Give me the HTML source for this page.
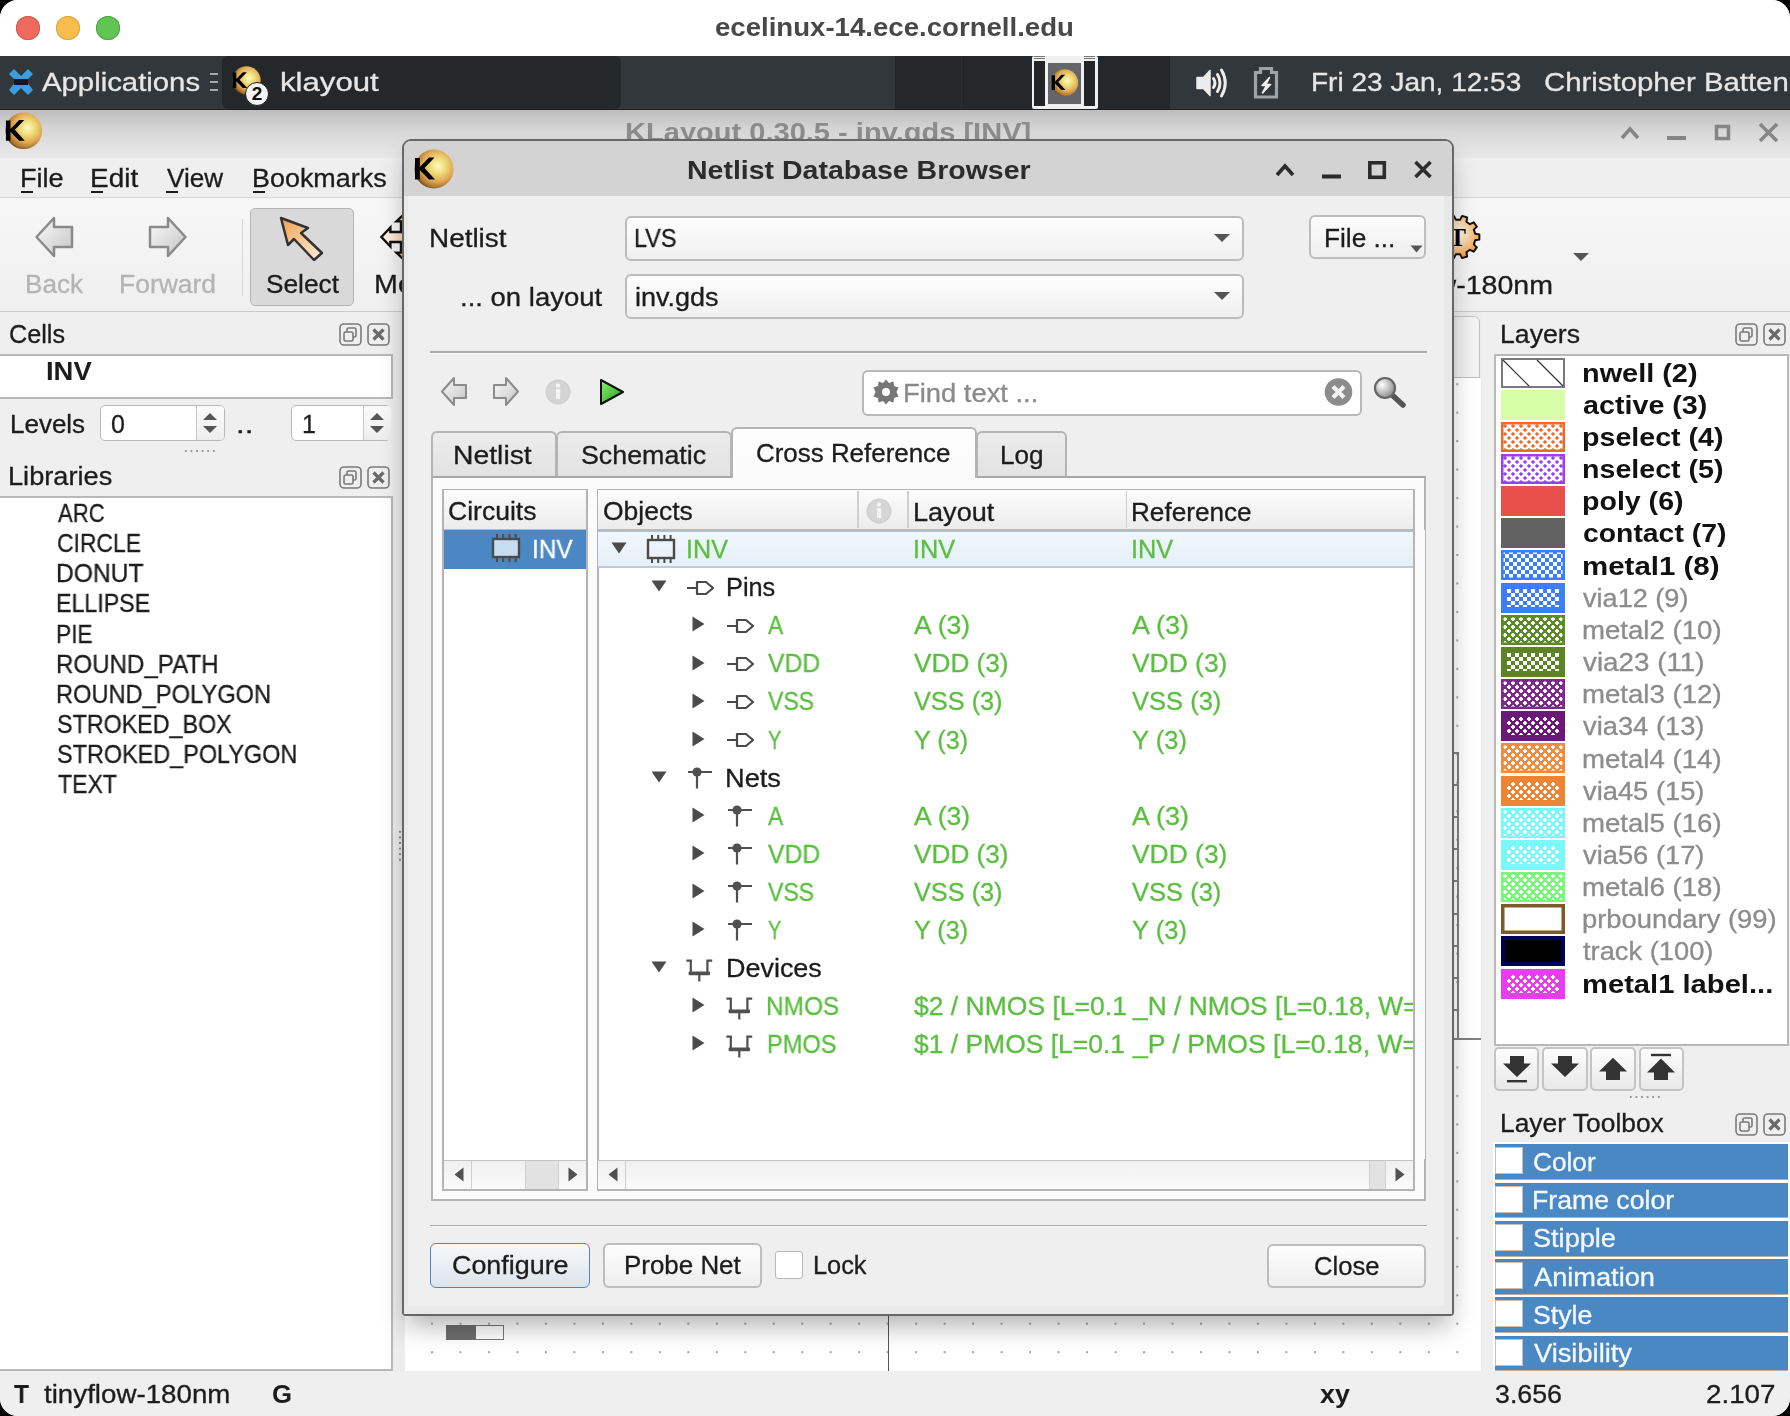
<!DOCTYPE html>
<html><head><meta charset="utf-8"><style>
html,body{margin:0;padding:0;background:#000;}
#w{position:absolute;left:0;top:0;width:1790px;height:1416px;overflow:hidden;border-radius:18px;background:#efefef;font-family:'Liberation Sans',sans-serif;}
#w div{position:absolute;}
.t{white-space:pre;line-height:1;transform-origin:0 0;will-change:transform;}
</style></head><body><div id="w">
<svg width="0" height="0" style="position:absolute"><defs><linearGradient id="bfg" x1="0" y1="0" x2="1" y2="1"><stop offset="0" stop-color="#fbfbfb"/><stop offset="1" stop-color="#c4c4c4"/></linearGradient></defs></svg>
<div style="left:0px;top:0px;width:1790px;height:56px;background:#ffffff"></div>
<div style="left:16px;top:16px;width:24px;height:24px;background:#ee6a5f;border-radius:50%;box-shadow:inset 0 0 0 1px #d85548"></div>
<div style="left:56px;top:16px;width:24px;height:24px;background:#f5be4f;border-radius:50%;box-shadow:inset 0 0 0 1px #d9a43a"></div>
<div style="left:96px;top:16px;width:24px;height:24px;background:#61c554;border-radius:50%;box-shadow:inset 0 0 0 1px #4ca63f"></div>
<div class="t" style="left:714.80px;top:15.00px;font-size:25px;color:#484848;font-weight:700;transform:scaleX(1.1038);">ecelinux-14.ece.cornell.edu</div>
<div style="left:0px;top:56px;width:1790px;height:54px;background:#32373b"></div>
<div style="left:222px;top:56px;width:399px;height:53px;background:#24282b;border-radius:6px"></div>
<div style="left:895px;top:56px;width:275px;height:54px;background:#24282b"></div>
<div style="left:961px;top:56px;width:1px;height:54px;background:#2c3033"></div>
<div style="left:0px;top:108.5px;width:1790px;height:1.5px;background:#1e2123"></div>
<svg style="position:absolute;left:6px;top:68px;" width="30" height="30" viewBox="0 0 30 30"><path d="M3 6 L8 1 L15 8 L22 1 L27 6 L20 13 L27 22 L22 27 L15 20 L8 27 L3 22 L10 13 Z" fill="#3a9fdc"/><path d="M8 11 L22 11 L22 17 L8 17 Z" fill="#0d1a22"/></svg>
<div class="t" style="left:42.30px;top:70.00px;font-size:25px;color:#e6e6e6;-webkit-text-stroke:0.3px #e6e6e6;transform:scaleX(1.1727);">Applications</div>
<div style="left:210px;top:73px;width:8px;height:2px;background:#aaa"></div><div style="left:210px;top:81px;width:8px;height:2px;background:#aaa"></div><div style="left:210px;top:89px;width:8px;height:2px;background:#aaa"></div>
<svg style="position:absolute;left:231.5px;top:65.5px" width="29.0" height="29.0" viewBox="0 0 40 40"><defs><radialGradient id="kgp1" cx="0.6" cy="0.42" r="0.62"><stop offset="0" stop-color="#fdf8c8"/><stop offset="0.3" stop-color="#efdf7c"/><stop offset="0.65" stop-color="#e2a854"/><stop offset="0.9" stop-color="#a8742c"/><stop offset="1" stop-color="#6e4a18"/></radialGradient></defs><circle cx="20" cy="20" r="19.5" fill="url(#kgp1)"/><path d="M1 9 L5.8 9 L5.8 18 L15 8.5 L20.5 8.5 L10.5 19 L21 30.5 L15 30.5 L5.8 21 L5.8 30.5 L1 30.5 Z" fill="#000"/></svg>
<div style="left:245px;top:81.5px;width:24px;height:24px;border-radius:50%;background:#f4f4f4;border:1.5px solid #1a1a1a;box-sizing:border-box;font:bold 19px/22px Liberation Sans;color:#111;text-align:center">2</div>
<div class="t" style="left:279.55px;top:70.00px;font-size:25px;color:#e6e6e6;-webkit-text-stroke:0.3px #e6e6e6;transform:scaleX(1.2458);">klayout</div>
<div style="left:1031.5px;top:56px;width:66px;height:52.5px;background:#f0f0f0;border-radius:2px"></div>
<div style="left:1033.8px;top:61px;width:11.3px;height:44.8px;background:#222528"></div>
<div style="left:1047.9px;top:63px;width:33.1px;height:41.3px;background:#636669"></div>
<div style="left:1083.8px;top:61px;width:11.6px;height:44.8px;background:#222528"></div>
<div style="left:1034px;top:56.3px;width:11px;height:1px;background:#777"></div>
<div style="left:1034px;top:58.3px;width:11px;height:1px;background:#777"></div>
<div style="left:1084px;top:56.3px;width:11px;height:1px;background:#777"></div>
<div style="left:1084px;top:58.3px;width:11px;height:1px;background:#777"></div>
<svg style="position:absolute;left:1050.5px;top:68.7px" width="27.6" height="27.6" viewBox="0 0 40 40"><defs><radialGradient id="kgp2" cx="0.6" cy="0.42" r="0.62"><stop offset="0" stop-color="#fdf8c8"/><stop offset="0.3" stop-color="#efdf7c"/><stop offset="0.65" stop-color="#e2a854"/><stop offset="0.9" stop-color="#a8742c"/><stop offset="1" stop-color="#6e4a18"/></radialGradient></defs><circle cx="20" cy="20" r="19.5" fill="url(#kgp2)"/><path d="M1 9 L5.8 9 L5.8 18 L15 8.5 L20.5 8.5 L10.5 19 L21 30.5 L15 30.5 L5.8 21 L5.8 30.5 L1 30.5 Z" fill="#000"/></svg>
<svg style="position:absolute;left:1194px;top:66px;" width="40" height="34" viewBox="0 0 40 34"><path d="M3 11.5 L9.5 11.5 L16 4.5 L16 29.5 L9.5 22.5 L3 22.5 Z" fill="#ececec" stroke="#ececec" stroke-width="1.5" stroke-linejoin="round"/><path d="M19.5 12.5 Q22.5 17 19.5 21.5" stroke="#ececec" stroke-width="3" fill="none" stroke-linecap="round"/><path d="M23.5 8.5 Q28.5 17 23.5 25.5" stroke="#ececec" stroke-width="3" fill="none" stroke-linecap="round"/><path d="M27.5 4 Q35 17 27.5 30" stroke="#ececec" stroke-width="3" fill="none" stroke-linecap="round"/></svg>
<svg style="position:absolute;left:1253px;top:66px;" width="26" height="34" viewBox="0 0 26 34"><path d="M2.5 31 L2.5 6.5 L7.5 6.5 L7.5 2.5 L18.5 2.5 L18.5 6.5 L23.5 6.5 L23.5 31 Z" fill="none" stroke="#a0a3a5" stroke-width="3.2"/><path d="M16.5 11.5 L9 19.5 L13.5 19.5 L9.5 27 L17.5 18.5 L13 18.5 Z" fill="#f0f0f0" stroke="#f0f0f0" stroke-width="1.6" stroke-linejoin="round"/></svg>
<div class="t" style="left:1311.06px;top:70.00px;font-size:25px;color:#e6e6e6;-webkit-text-stroke:0.3px #e6e6e6;transform:scaleX(1.1207);">Fri 23 Jan, 12:53</div>
<div class="t" style="left:1543.63px;top:70.00px;font-size:25px;color:#e6e6e6;-webkit-text-stroke:0.3px #e6e6e6;transform:scaleX(1.1741);">Christopher Batten</div>
<div style="left:0px;top:110px;width:1790px;height:48px;background:linear-gradient(#bdbdbd,#d8d8d8 45%,#e9e9e9)"></div>
<svg style="position:absolute;left:5.099999999999998px;top:111.8px" width="37.6" height="37.6" viewBox="0 0 40 40"><defs><radialGradient id="kgm1" cx="0.6" cy="0.42" r="0.62"><stop offset="0" stop-color="#fdf8c8"/><stop offset="0.3" stop-color="#efdf7c"/><stop offset="0.65" stop-color="#e2a854"/><stop offset="0.9" stop-color="#a8742c"/><stop offset="1" stop-color="#6e4a18"/></radialGradient></defs><circle cx="20" cy="20" r="19.5" fill="url(#kgm1)"/><path d="M1 9 L5.8 9 L5.8 18 L15 8.5 L20.5 8.5 L10.5 19 L21 30.5 L15 30.5 L5.8 21 L5.8 30.5 L1 30.5 Z" fill="#000"/></svg>
<div class="t" style="left:624.64px;top:120.00px;font-size:25px;color:#8c8c8c;font-weight:700;transform:scaleX(1.1619);">KLayout 0.30.5 - inv.gds [INV]</div>
<svg style="position:absolute;left:1618px;top:120px;" width="165" height="24" viewBox="0 0 165 24"><path d="M4 18 L12 9 L20 18" stroke="#858585" stroke-width="3.5" fill="none"/><rect x="49" y="16" width="19" height="4" fill="#858585"/><rect x="98.5" y="6.5" width="12" height="12" stroke="#858585" stroke-width="3.5" fill="none"/><path d="M142 4 L159 21 M159 4 L142 21" stroke="#858585" stroke-width="3.5"/></svg>
<div style="left:0px;top:158px;width:1790px;height:40px;background:#efefef"></div>
<div style="left:0px;top:197px;width:1790px;height:1px;background:#d6d6d6"></div>
<div class="t" style="left:19.63px;top:166.00px;font-size:25px;color:#1c1c1c;-webkit-text-stroke:0.3px #1c1c1c;transform:scaleX(1.0835);">File</div>
<div style="left:20.5px;top:191px;width:12px;height:2px;background:#1c1c1c"></div>
<div class="t" style="left:89.56px;top:166.00px;font-size:25px;color:#1c1c1c;-webkit-text-stroke:0.3px #1c1c1c;transform:scaleX(1.1183);">Edit</div>
<div style="left:90.5px;top:191px;width:12px;height:2px;background:#1c1c1c"></div>
<div class="t" style="left:167.30px;top:166.00px;font-size:25px;color:#1c1c1c;-webkit-text-stroke:0.3px #1c1c1c;transform:scaleX(1.0424);">View</div>
<div style="left:166.0px;top:191px;width:12px;height:2px;background:#1c1c1c"></div>
<div class="t" style="left:252.45px;top:166.00px;font-size:25px;color:#1c1c1c;-webkit-text-stroke:0.3px #1c1c1c;transform:scaleX(1.0764);">Bookmarks</div>
<div style="left:253.3px;top:191px;width:12px;height:2px;background:#1c1c1c"></div>
<div style="left:0px;top:198px;width:1790px;height:114px;background:linear-gradient(#f7f7f7,#efefef)"></div>
<div style="left:0px;top:311px;width:1790px;height:1px;background:#c9c9c9"></div>
<svg style="position:absolute;left:34px;top:214px;" width="42" height="46" viewBox="0 0 42 46"><defs><linearGradient id="bfg" x1="0" y1="0" x2="1" y2="1"><stop offset="0" stop-color="#fafafa"/><stop offset="1" stop-color="#c8c8c8"/></linearGradient></defs><path d="M2.5 23 L20 4 L20 13 L38 13 L38 33 L20 33 L20 42 Z" fill="url(#bfg)" stroke="#8a8a8a" stroke-width="2.5" stroke-linejoin="round"/></svg>
<svg style="position:absolute;left:146px;top:214px;" width="42" height="46" viewBox="0 0 42 46"><path d="M39.5 23 L22 4 L22 13 L4 13 L4 33 L22 33 L22 42 Z" fill="url(#bfg)" stroke="#8a8a8a" stroke-width="2.5" stroke-linejoin="round"/></svg>
<div class="t" style="left:24.71px;top:272.00px;font-size:25px;color:#b4b4b4;-webkit-text-stroke:0.3px #b4b4b4;transform:scaleX(1.0448);">Back</div>
<div class="t" style="left:118.68px;top:272.00px;font-size:25px;color:#b4b4b4;-webkit-text-stroke:0.3px #b4b4b4;transform:scaleX(1.0588);">Forward</div>
<div style="left:241.5px;top:219px;width:1.5px;height:77px;background:#d8d8d8"></div>
<div style="left:250px;top:207.5px;width:104px;height:98.5px;background:#d9d9d9;border:1.5px solid #b4b4b4;border-radius:5px;box-sizing:border-box"></div>
<svg style="position:absolute;left:276px;top:214px;" width="56" height="56" viewBox="0 0 56 56"><defs><linearGradient id="arg" x1="0" y1="0" x2="1" y2="1"><stop offset="0" stop-color="#f2a050"/><stop offset="1" stop-color="#fff0dc"/></linearGradient></defs><path d="M5 4 L32 14 L25 19 L46 39 L38 46 L18 25 L12 31 Z" fill="url(#arg)" stroke="#333" stroke-width="2.5" stroke-linejoin="round"/></svg>
<div class="t" style="left:266.25px;top:272.00px;font-size:25px;color:#1c1c1c;-webkit-text-stroke:0.3px #1c1c1c;transform:scaleX(1.0505);">Select</div>
<svg style="position:absolute;left:378px;top:209px;" width="56" height="56" viewBox="0 0 56 56"><defs><linearGradient id="mvg" x1="0" y1="0" x2="1" y2="0"><stop offset="0" stop-color="#fff8ee"/><stop offset="1" stop-color="#f0b070"/></linearGradient></defs><path d="M3.4 28 L12.4 18.5 L12.4 23 L23 23 L23 12.4 L18.5 12.4 L28 3.4 L37.5 12.4 L33 12.4 L33 23 L43.6 23 L43.6 18.5 L52.6 28 L43.6 37.5 L43.6 33 L33 33 L33 43.6 L37.5 43.6 L28 52.6 L18.5 43.6 L23 43.6 L23 33 L12.4 33 L12.4 37.5 Z" fill="url(#mvg)" stroke="#111" stroke-width="2.4" stroke-linejoin="miter"/></svg>
<div class="t" style="left:373.51px;top:272.00px;font-size:25px;color:#1c1c1c;-webkit-text-stroke:0.3px #1c1c1c;transform:scaleX(1.1469);">Mo</div>
<svg style="position:absolute;left:1432.5px;top:212px;" width="50" height="50" viewBox="0 0 50 50"><defs><radialGradient id="tg" cx="0.45" cy="0.4" r="0.62"><stop offset="0" stop-color="#fffaf0"/><stop offset="0.45" stop-color="#f8d8b0"/><stop offset="1" stop-color="#ee9838"/></radialGradient></defs><path d="M42.18 21.66 L46.34 22.38 L46.34 27.62 L42.18 28.34 L40.86 32.40 L43.80 35.42 L40.72 39.66 L36.93 37.80 L33.48 40.31 L34.09 44.49 L29.10 46.10 L27.13 42.37 L22.87 42.37 L20.90 46.10 L15.91 44.49 L16.52 40.31 L13.07 37.80 L9.28 39.66 L6.20 35.42 L9.14 32.40 L7.82 28.34 L3.66 27.62 L3.66 22.38 L7.82 21.66 L9.14 17.60 L6.20 14.58 L9.28 10.34 L13.07 12.20 L16.52 9.69 L15.91 5.51 L20.90 3.90 L22.87 7.63 L27.13 7.63 L29.10 3.90 L34.09 5.51 L33.48 9.69 L36.93 12.20 L40.72 10.34 L43.80 14.58 L40.86 17.60 Z" fill="url(#tg)" stroke="#111" stroke-width="2" stroke-linejoin="round"/><text x="24.5" y="33.5" font-family="Liberation Serif" font-weight="bold" font-size="25" text-anchor="middle" fill="#000">T</text></svg>
<div class="t" style="left:1360.80px;top:273.00px;font-size:25px;color:#1c1c1c;-webkit-text-stroke:0.3px #1c1c1c;transform:scaleX(1.1416);">tinyflow-180nm</div>
<svg style="position:absolute;left:1572px;top:252px;" width="18" height="10" viewBox="0 0 18 10"><path d="M1 1 L17 1 L9 9 Z" fill="#555"/></svg>
<div style="left:0px;top:312px;width:393px;height:1059px;background:#efefef"></div>
<div class="t" style="left:9.29px;top:322.00px;font-size:25px;color:#1c1c1c;-webkit-text-stroke:0.3px #1c1c1c;transform:scaleX(1.0080);">Cells</div>
<svg style="position:absolute;left:339px;top:323px;" width="52" height="23" viewBox="0 0 52 23"><rect x="1" y="1" width="21" height="21" rx="4" fill="none" stroke="#7a7a7a" stroke-width="1.6"/><rect x="8" y="5" width="9" height="9" rx="1.5" fill="none" stroke="#7a7a7a" stroke-width="1.6"/><rect x="5" y="9" width="9" height="9" rx="1.5" fill="#efefef" stroke="#7a7a7a" stroke-width="1.6"/><rect x="29" y="1" width="21" height="21" rx="4" fill="none" stroke="#7a7a7a" stroke-width="1.6"/><path d="M34.5 6.5 L44.5 16.5 M44.5 6.5 L34.5 16.5" stroke="#6a6a6a" stroke-width="3.2"/></svg>
<div style="left:-2px;top:354px;width:395px;height:45px;background:#fff;border:2px solid #b8b8b8;box-sizing:border-box"></div>
<div class="t" style="left:45.70px;top:359.00px;font-size:25px;color:#1c1c1c;font-weight:700;transform:scaleX(1.0976);">INV</div>
<div class="t" style="left:10.22px;top:412.00px;font-size:25px;color:#1c1c1c;-webkit-text-stroke:0.3px #1c1c1c;transform:scaleX(1.0392);">Levels</div>
<div style="left:99.5px;top:405px;width:125px;height:36px;background:#fff;border:1.5px solid #b9b9b9;border-radius:5px;box-sizing:border-box"></div>
<div style="left:196px;top:406px;width:27.0px;height:34px;background:linear-gradient(#fbfbfb,#eeeeee);border-left:1.5px solid #c8c8c8;border-radius:0 4px 4px 0"></div>
<svg style="position:absolute;left:202.25px;top:411.0px;" width="16" height="24" viewBox="0 0 16 24"><path d="M1 9 L8 2 L15 9 Z M1 15 L8 22 L15 15 Z" fill="#555"/></svg>
<div class="t" style="left:110.80px;top:412.00px;font-size:25px;color:#1c1c1c;-webkit-text-stroke:0.3px #1c1c1c;">0</div>
<div class="t" style="left:236.29px;top:412.00px;font-size:25px;color:#1c1c1c;-webkit-text-stroke:0.3px #1c1c1c;transform:scaleX(1.2568);">..</div>
<div style="left:290.5px;top:405px;width:100.5px;height:36px;background:#fff;border:1.5px solid #b9b9b9;border-radius:5px;box-sizing:border-box"></div>
<div style="left:362.5px;top:406px;width:27.0px;height:34px;background:linear-gradient(#fbfbfb,#eeeeee);border-left:1.5px solid #c8c8c8;border-radius:0 4px 4px 0"></div>
<svg style="position:absolute;left:368.75px;top:411.0px;" width="16" height="24" viewBox="0 0 16 24"><path d="M1 9 L8 2 L15 9 Z M1 15 L8 22 L15 15 Z" fill="#555"/></svg>
<div class="t" style="left:301.80px;top:412.00px;font-size:25px;color:#1c1c1c;-webkit-text-stroke:0.3px #1c1c1c;">1</div>
<div style="left:183px;top:450px;width:34px;height:2px;background:radial-gradient(circle,#999 0.8px,transparent 1px) 0 0/5.6px 2px"></div>
<div class="t" style="left:8.13px;top:464.00px;font-size:25px;color:#1c1c1c;-webkit-text-stroke:0.3px #1c1c1c;transform:scaleX(1.0870);">Libraries</div>
<svg style="position:absolute;left:339px;top:466px;" width="52" height="23" viewBox="0 0 52 23"><rect x="1" y="1" width="21" height="21" rx="4" fill="none" stroke="#7a7a7a" stroke-width="1.6"/><rect x="8" y="5" width="9" height="9" rx="1.5" fill="none" stroke="#7a7a7a" stroke-width="1.6"/><rect x="5" y="9" width="9" height="9" rx="1.5" fill="#efefef" stroke="#7a7a7a" stroke-width="1.6"/><rect x="29" y="1" width="21" height="21" rx="4" fill="none" stroke="#7a7a7a" stroke-width="1.6"/><path d="M34.5 6.5 L44.5 16.5 M44.5 6.5 L34.5 16.5" stroke="#6a6a6a" stroke-width="3.2"/></svg>
<div style="left:-2px;top:496px;width:395px;height:875px;background:#fff;border:2px solid #b8b8b8;box-sizing:border-box"></div>
<div class="t" style="left:58.10px;top:501.00px;font-size:25px;color:#1c1c1c;-webkit-text-stroke:0.3px #1c1c1c;transform:scaleX(0.8838);">ARC</div>
<div class="t" style="left:57.18px;top:531.00px;font-size:25px;color:#1c1c1c;-webkit-text-stroke:0.3px #1c1c1c;transform:scaleX(0.9165);">CIRCLE</div>
<div class="t" style="left:56.13px;top:561.00px;font-size:25px;color:#1c1c1c;-webkit-text-stroke:0.3px #1c1c1c;transform:scaleX(0.9849);">DONUT</div>
<div class="t" style="left:56.24px;top:591.00px;font-size:25px;color:#1c1c1c;-webkit-text-stroke:0.3px #1c1c1c;transform:scaleX(0.9283);">ELLIPSE</div>
<div class="t" style="left:56.28px;top:622.00px;font-size:25px;color:#1c1c1c;-webkit-text-stroke:0.3px #1c1c1c;transform:scaleX(0.9091);">PIE</div>
<div class="t" style="left:56.17px;top:652.00px;font-size:25px;color:#1c1c1c;-webkit-text-stroke:0.3px #1c1c1c;transform:scaleX(0.9645);">ROUND_PATH</div>
<div class="t" style="left:56.21px;top:682.00px;font-size:25px;color:#1c1c1c;-webkit-text-stroke:0.3px #1c1c1c;transform:scaleX(0.9460);">ROUND_POLYGON</div>
<div class="t" style="left:57.17px;top:712.00px;font-size:25px;color:#1c1c1c;-webkit-text-stroke:0.3px #1c1c1c;transform:scaleX(0.9316);">STROKED_BOX</div>
<div class="t" style="left:57.16px;top:742.00px;font-size:25px;color:#1c1c1c;-webkit-text-stroke:0.3px #1c1c1c;transform:scaleX(0.9368);">STROKED_POLYGON</div>
<div class="t" style="left:58.10px;top:772.00px;font-size:25px;color:#1c1c1c;-webkit-text-stroke:0.3px #1c1c1c;transform:scaleX(0.9227);">TEXT</div>
<div style="left:393px;top:312px;width:1090px;height:1059px;background:#ececec"></div>
<div style="left:399px;top:829px;width:2px;height:33px;background:radial-gradient(circle,#888 0.8px,transparent 1px) 0 0/2px 5.6px"></div>
<div style="left:405px;top:378px;width:1076px;height:993px;background:#fff"></div>
<svg style="position:absolute;left:405px;top:378px" width="1076" height="993"><defs><pattern id="dotp" patternUnits="userSpaceOnUse" x="26" y="5.2" width="28.48" height="28.47"><rect x="0" y="0" width="2" height="2" fill="#a4a4a4"/></pattern></defs><rect width="1076" height="993" fill="url(#dotp)"/></svg>
<div style="left:1440px;top:316px;width:40px;height:62px;background:linear-gradient(90deg,#e8e8e8,#f4f4f4);border:1.5px solid #c0c0c0;border-radius:6px 6px 0 0;box-sizing:border-box"></div>
<div style="left:1456.5px;top:752px;width:2px;height:287px;background:#808080"></div>
<div style="left:1453px;top:752.0px;width:5px;height:2px;background:#808080"></div>
<div style="left:1453px;top:784.1px;width:5px;height:2px;background:#808080"></div>
<div style="left:1453px;top:816.2px;width:5px;height:2px;background:#808080"></div>
<div style="left:1453px;top:848.3px;width:5px;height:2px;background:#808080"></div>
<div style="left:1453px;top:880.4px;width:5px;height:2px;background:#808080"></div>
<div style="left:1453px;top:912.5px;width:5px;height:2px;background:#808080"></div>
<div style="left:1453px;top:944.6px;width:5px;height:2px;background:#808080"></div>
<div style="left:1453px;top:976.7px;width:5px;height:2px;background:#808080"></div>
<div style="left:1453px;top:1008.8px;width:5px;height:2px;background:#808080"></div>
<div style="left:1453px;top:1038px;width:28px;height:2px;background:#808080"></div>
<div style="left:446px;top:1325px;width:58px;height:15px;background:#fff;border:1.5px solid #777;box-sizing:border-box"></div>
<div style="left:446px;top:1325px;width:30px;height:15px;background:#6e6e6e"></div>
<div style="left:887.5px;top:1316px;width:1.5px;height:55px;background:#555"></div>
<div style="left:1482px;top:312px;width:308px;height:1059px;background:#efefef"></div>
<div class="t" style="left:1500.47px;top:322.00px;font-size:25px;color:#1c1c1c;-webkit-text-stroke:0.3px #1c1c1c;transform:scaleX(1.0657);">Layers</div>
<svg style="position:absolute;left:1735px;top:323px;" width="52" height="23" viewBox="0 0 52 23"><rect x="1" y="1" width="21" height="21" rx="4" fill="none" stroke="#7a7a7a" stroke-width="1.6"/><rect x="8" y="5" width="9" height="9" rx="1.5" fill="none" stroke="#7a7a7a" stroke-width="1.6"/><rect x="5" y="9" width="9" height="9" rx="1.5" fill="#efefef" stroke="#7a7a7a" stroke-width="1.6"/><rect x="29" y="1" width="21" height="21" rx="4" fill="none" stroke="#7a7a7a" stroke-width="1.6"/><path d="M34.5 6.5 L44.5 16.5 M44.5 6.5 L34.5 16.5" stroke="#6a6a6a" stroke-width="3.2"/></svg>
<div style="left:1493.5px;top:354px;width:295px;height:692px;background:#fff;border:2px solid #b8b8b8;box-sizing:border-box"></div>
<svg style="position:absolute;left:1501px;top:357.5px" width="64" height="30"><rect x="1" y="1" width="62" height="28" fill="#fff" stroke="#7a7a7a" stroke-width="2"/><path d="M2 2 L28 28 M36 2 L62 28" stroke="#333" stroke-width="1.2"/></svg>
<div class="t" style="left:1582.14px;top:361.00px;font-size:25px;color:#111;font-weight:700;transform:scaleX(1.1552);">nwell (2)</div>
<div style="left:1501px;top:389.65999999999997px;width:64px;height:30px;background:#d6ffa8"></div>
<div class="t" style="left:1583.30px;top:393.00px;font-size:25px;color:#111;font-weight:700;transform:scaleX(1.1475);">active (3)</div>
<div style="left:1501px;top:421.82px;width:64px;height:30px;background:radial-gradient(circle,#ec6a2a 1.4px,transparent 1.9px) 0px 0px/8px 8px,radial-gradient(circle,#ec6a2a 1.4px,transparent 1.9px) 4px 4px/8px 8px,#fff;box-shadow:inset 0 0 0 2.5px #ec6a2a"></div>
<div class="t" style="left:1582.16px;top:425.00px;font-size:25px;color:#111;font-weight:700;transform:scaleX(1.1444);">pselect (4)</div>
<div style="left:1501px;top:453.98px;width:64px;height:30px;background:radial-gradient(circle,#9a3cf8 1.4px,transparent 1.9px) 0px 0px/8px 8px,radial-gradient(circle,#9a3cf8 1.4px,transparent 1.9px) 4px 4px/8px 8px,#fff;box-shadow:inset 0 0 0 2.5px #9a3cf8"></div>
<div class="t" style="left:1582.16px;top:457.00px;font-size:25px;color:#111;font-weight:700;transform:scaleX(1.1444);">nselect (5)</div>
<div style="left:1501px;top:486.14px;width:64px;height:30px;background:#e8504c"></div>
<div class="t" style="left:1582.16px;top:489.00px;font-size:25px;color:#111;font-weight:700;transform:scaleX(1.1420);">poly (6)</div>
<div style="left:1501px;top:518.3px;width:64px;height:30px;background:#626262"></div>
<div class="t" style="left:1583.30px;top:521.00px;font-size:25px;color:#111;font-weight:700;transform:scaleX(1.1342);">contact (7)</div>
<div style="left:1501px;top:550.46px;width:64px;height:30px;background:conic-gradient(#3c7ef4 25%,#fff 0 50%,#3c7ef4 0 75%,#fff 0) 0 0/8px 8px;box-shadow:inset 0 0 0 2.5px #3c7ef4"></div>
<div class="t" style="left:1582.12px;top:554.00px;font-size:25px;color:#111;font-weight:700;transform:scaleX(1.1787);">metal1 (8)</div>
<div style="left:1501px;top:582.62px;width:64px;height:30px;background:#3c7ef4"></div>
<div style="left:1507px;top:588.62px;width:52px;height:18px;background:conic-gradient(#3c7ef4 25%,#fff 0 50%,#3c7ef4 0 75%,#fff 0) 0 0/8px 8px"></div>
<div class="t" style="left:1583.30px;top:586.00px;font-size:25px;color:#8c8c8c;-webkit-text-stroke:0.3px #8c8c8c;transform:scaleX(1.0840);">via12 (9)</div>
<div style="left:1501px;top:614.78px;width:64px;height:30px;background:repeating-linear-gradient(45deg,#5c8a24 0 2.3px,transparent 2.3px 5.66px),repeating-linear-gradient(-45deg,#5c8a24 0 2.3px,transparent 2.3px 5.66px),#fff;box-shadow:inset 0 0 0 2.5px #5c8a24"></div>
<div class="t" style="left:1582.20px;top:618.00px;font-size:25px;color:#8c8c8c;-webkit-text-stroke:0.3px #8c8c8c;transform:scaleX(1.1038);">metal2 (10)</div>
<div style="left:1501px;top:646.9399999999999px;width:64px;height:30px;background:#5c8424"></div>
<div style="left:1507px;top:652.9399999999999px;width:52px;height:18px;background:conic-gradient(#5c8424 25%,#fff 0 50%,#5c8424 0 75%,#fff 0) 0 0/8px 8px"></div>
<div class="t" style="left:1583.30px;top:650.00px;font-size:25px;color:#8c8c8c;-webkit-text-stroke:0.3px #8c8c8c;transform:scaleX(1.1112);">via23 (11)</div>
<div style="left:1501px;top:679.0999999999999px;width:64px;height:30px;background:repeating-linear-gradient(45deg,#7c2a8c 0 2.3px,transparent 2.3px 5.66px),repeating-linear-gradient(-45deg,#7c2a8c 0 2.3px,transparent 2.3px 5.66px),#fff;box-shadow:inset 0 0 0 2.5px #7c2a8c"></div>
<div class="t" style="left:1582.20px;top:682.00px;font-size:25px;color:#8c8c8c;-webkit-text-stroke:0.3px #8c8c8c;transform:scaleX(1.1038);">metal3 (12)</div>
<div style="left:1501px;top:711.26px;width:64px;height:30px;background:#6c1878"></div>
<div style="left:1507px;top:717.26px;width:52px;height:18px;background:repeating-linear-gradient(45deg,#6c1878 0 2.3px,transparent 2.3px 5.66px),repeating-linear-gradient(-45deg,#6c1878 0 2.3px,transparent 2.3px 5.66px),#fff"></div>
<div class="t" style="left:1583.30px;top:714.00px;font-size:25px;color:#8c8c8c;-webkit-text-stroke:0.3px #8c8c8c;transform:scaleX(1.0925);">via34 (13)</div>
<div style="left:1501px;top:743.42px;width:64px;height:30px;background:repeating-linear-gradient(45deg,#f08c3c 0 2.3px,transparent 2.3px 5.66px),repeating-linear-gradient(-45deg,#f08c3c 0 2.3px,transparent 2.3px 5.66px),#fff;box-shadow:inset 0 0 0 2.5px #f08c3c"></div>
<div class="t" style="left:1582.20px;top:747.00px;font-size:25px;color:#8c8c8c;-webkit-text-stroke:0.3px #8c8c8c;transform:scaleX(1.1038);">metal4 (14)</div>
<div style="left:1501px;top:775.5799999999999px;width:64px;height:30px;background:#ec8432"></div>
<div style="left:1507px;top:781.5799999999999px;width:52px;height:18px;background:repeating-linear-gradient(45deg,#ec8432 0 2.3px,transparent 2.3px 5.66px),repeating-linear-gradient(-45deg,#ec8432 0 2.3px,transparent 2.3px 5.66px),#fff"></div>
<div class="t" style="left:1583.30px;top:779.00px;font-size:25px;color:#8c8c8c;-webkit-text-stroke:0.3px #8c8c8c;transform:scaleX(1.0925);">via45 (15)</div>
<div style="left:1501px;top:807.74px;width:64px;height:30px;background:repeating-linear-gradient(45deg,#78f8f8 0 2.3px,transparent 2.3px 5.66px),repeating-linear-gradient(-45deg,#78f8f8 0 2.3px,transparent 2.3px 5.66px),#fff;box-shadow:inset 0 0 0 2.5px #78f8f8"></div>
<div class="t" style="left:1582.20px;top:811.00px;font-size:25px;color:#8c8c8c;-webkit-text-stroke:0.3px #8c8c8c;transform:scaleX(1.1038);">metal5 (16)</div>
<div style="left:1501px;top:839.9px;width:64px;height:30px;background:#78f8f8"></div>
<div style="left:1507px;top:845.9px;width:52px;height:18px;background:repeating-linear-gradient(45deg,#78f8f8 0 2.3px,transparent 2.3px 5.66px),repeating-linear-gradient(-45deg,#78f8f8 0 2.3px,transparent 2.3px 5.66px),#fff"></div>
<div class="t" style="left:1583.30px;top:843.00px;font-size:25px;color:#8c8c8c;-webkit-text-stroke:0.3px #8c8c8c;transform:scaleX(1.0925);">via56 (17)</div>
<div style="left:1501px;top:872.06px;width:64px;height:30px;background:repeating-linear-gradient(45deg,#78f878 0 2.3px,transparent 2.3px 5.66px),repeating-linear-gradient(-45deg,#78f878 0 2.3px,transparent 2.3px 5.66px),#fff;box-shadow:inset 0 0 0 2.5px #78f878"></div>
<div class="t" style="left:1582.20px;top:875.00px;font-size:25px;color:#8c8c8c;-webkit-text-stroke:0.3px #8c8c8c;transform:scaleX(1.1038);">metal6 (18)</div>
<div style="left:1501px;top:904.2199999999999px;width:64px;height:30px;background:#fff;box-shadow:inset 0 0 0 3.5px #7c5a2a"></div>
<div class="t" style="left:1582.21px;top:907.00px;font-size:25px;color:#8c8c8c;-webkit-text-stroke:0.3px #8c8c8c;transform:scaleX(1.0937);">prboundary (99)</div>
<div style="left:1501px;top:936.3799999999999px;width:64px;height:30px;background:#000;box-shadow:inset 0 0 0 4px #000058"></div>
<div class="t" style="left:1583.30px;top:939.00px;font-size:25px;color:#8c8c8c;-webkit-text-stroke:0.3px #8c8c8c;transform:scaleX(1.0918);">track (100)</div>
<div style="left:1501px;top:968.54px;width:64px;height:30px;background:#e83cf0"></div>
<div style="left:1507px;top:974.54px;width:52px;height:18px;background:repeating-linear-gradient(45deg,#e83cf0 0 2.3px,transparent 2.3px 5.66px),repeating-linear-gradient(-45deg,#e83cf0 0 2.3px,transparent 2.3px 5.66px),#fff"></div>
<div class="t" style="left:1582.13px;top:972.00px;font-size:25px;color:#111;font-weight:700;transform:scaleX(1.1665);">metal1 label...</div>
<div style="left:1494px;top:1047.3px;width:45px;height:44.2px;background:linear-gradient(#fdfdfd,#e9e9e9);border:2px solid #c4c4c4;border-radius:5px;box-sizing:border-box"></div>
<svg style="position:absolute;left:1501.5px;top:1050px;" width="30" height="36" viewBox="0 0 30 36"><path d="M8 6 L22 6 L22 13.5 L29 13.5 L15 27 L1 13.5 L8 13.5 Z" fill="#333"/><rect x="5" y="30" width="20" height="2.4" fill="#333"/></svg>
<div style="left:1542px;top:1047.3px;width:45.5px;height:44.2px;background:linear-gradient(#fdfdfd,#e9e9e9);border:2px solid #c4c4c4;border-radius:5px;box-sizing:border-box"></div>
<svg style="position:absolute;left:1549.75px;top:1050px;" width="30" height="36" viewBox="0 0 30 36"><path d="M8 6 L22 6 L22 13.5 L29 13.5 L15 27 L1 13.5 L8 13.5 Z" fill="#333"/></svg>
<div style="left:1590px;top:1047.3px;width:45.5px;height:44.2px;background:linear-gradient(#fdfdfd,#e9e9e9);border:2px solid #c4c4c4;border-radius:5px;box-sizing:border-box"></div>
<svg style="position:absolute;left:1597.75px;top:1050px;" width="30" height="36" viewBox="0 0 30 36"><path d="M8 30 L22 30 L22 21.6 L29 21.6 L15 7.7 L1 21.6 L8 21.6 Z" fill="#333"/></svg>
<div style="left:1638.5px;top:1047.3px;width:45.5px;height:44.2px;background:linear-gradient(#fdfdfd,#e9e9e9);border:2px solid #c4c4c4;border-radius:5px;box-sizing:border-box"></div>
<svg style="position:absolute;left:1646.25px;top:1050px;" width="30" height="36" viewBox="0 0 30 36"><path d="M8 30 L22 30 L22 22.4 L29 22.4 L15 8.6 L1 22.4 L8 22.4 Z" fill="#333"/><rect x="5" y="3.8" width="20" height="2.4" fill="#333"/></svg>
<div style="left:1628px;top:1096px;width:34px;height:2px;background:radial-gradient(circle,#999 0.8px,transparent 1px) 0 0/5.6px 2px"></div>
<div class="t" style="left:1500.49px;top:1111.00px;font-size:25px;color:#1c1c1c;-webkit-text-stroke:0.3px #1c1c1c;transform:scaleX(1.0555);">Layer Toolbox</div>
<svg style="position:absolute;left:1735px;top:1112.5px;" width="52" height="23" viewBox="0 0 52 23"><rect x="1" y="1" width="21" height="21" rx="4" fill="none" stroke="#7a7a7a" stroke-width="1.6"/><rect x="8" y="5" width="9" height="9" rx="1.5" fill="none" stroke="#7a7a7a" stroke-width="1.6"/><rect x="5" y="9" width="9" height="9" rx="1.5" fill="#efefef" stroke="#7a7a7a" stroke-width="1.6"/><rect x="29" y="1" width="21" height="21" rx="4" fill="none" stroke="#7a7a7a" stroke-width="1.6"/><path d="M34.5 6.5 L44.5 16.5 M44.5 6.5 L34.5 16.5" stroke="#6a6a6a" stroke-width="3.2"/></svg>
<div style="left:1493px;top:1142.4px;width:297px;height:230px;background:#fff"></div>
<div style="left:1494.5px;top:1144.2px;width:293px;height:34.8px;background:#4a88c4;border-bottom:1.5px solid #b8b0a8;box-sizing:content-box"></div>
<div style="left:1495px;top:1147.2px;width:27.5px;height:27px;background:#fff;border:1.2px solid #c8beb4;box-sizing:border-box"></div>
<div class="t" style="left:1533.25px;top:1150.00px;font-size:25px;color:#f4f8fc;-webkit-text-stroke:0.3px #f4f8fc;transform:scaleX(1.0494);">Color</div>
<div style="left:1494.5px;top:1182.5px;width:293px;height:34.8px;background:#4a88c4;border-bottom:1.5px solid #b8b0a8;box-sizing:content-box"></div>
<div style="left:1495px;top:1185.5px;width:27.5px;height:27px;background:#fff;border:1.2px solid #c8beb4;box-sizing:border-box"></div>
<div class="t" style="left:1532.17px;top:1188.00px;font-size:25px;color:#f4f8fc;-webkit-text-stroke:0.3px #f4f8fc;transform:scaleX(1.0654);">Frame color</div>
<div style="left:1494.5px;top:1220.8px;width:293px;height:34.8px;background:#4a88c4;border-bottom:1.5px solid #b8b0a8;box-sizing:content-box"></div>
<div style="left:1495px;top:1223.8px;width:27.5px;height:27px;background:#fff;border:1.2px solid #c8beb4;box-sizing:border-box"></div>
<div class="t" style="left:1533.22px;top:1226.00px;font-size:25px;color:#f4f8fc;-webkit-text-stroke:0.3px #f4f8fc;transform:scaleX(1.0840);">Stipple</div>
<div style="left:1494.5px;top:1259.1000000000001px;width:293px;height:34.8px;background:#4a88c4;border-bottom:1.5px solid #b8b0a8;box-sizing:content-box"></div>
<div style="left:1495px;top:1262.1000000000001px;width:27.5px;height:27px;background:#fff;border:1.2px solid #c8beb4;box-sizing:border-box"></div>
<div class="t" style="left:1534.30px;top:1265.00px;font-size:25px;color:#f4f8fc;-webkit-text-stroke:0.3px #f4f8fc;transform:scaleX(1.0883);">Animation</div>
<div style="left:1494.5px;top:1297.4px;width:293px;height:34.8px;background:#4a88c4;border-bottom:1.5px solid #b8b0a8;box-sizing:content-box"></div>
<div style="left:1495px;top:1300.4px;width:27.5px;height:27px;background:#fff;border:1.2px solid #c8beb4;box-sizing:border-box"></div>
<div class="t" style="left:1533.23px;top:1303.00px;font-size:25px;color:#f4f8fc;-webkit-text-stroke:0.3px #f4f8fc;transform:scaleX(1.0675);">Style</div>
<div style="left:1494.5px;top:1335.7px;width:293px;height:34.8px;background:#4a88c4;border-bottom:1.5px solid #b8b0a8;box-sizing:content-box"></div>
<div style="left:1495px;top:1338.7px;width:27.5px;height:27px;background:#fff;border:1.2px solid #c8beb4;box-sizing:border-box"></div>
<div class="t" style="left:1534.30px;top:1341.00px;font-size:25px;color:#f4f8fc;-webkit-text-stroke:0.3px #f4f8fc;transform:scaleX(1.0903);">Visibility</div>
<div style="left:0px;top:1371px;width:1790px;height:45px;background:#efefef"></div>
<div class="t" style="left:13.60px;top:1382.00px;font-size:25px;color:#1c1c1c;font-weight:700;transform:scaleX(0.9800);">T</div>
<div class="t" style="left:44.30px;top:1382.00px;font-size:25px;color:#1c1c1c;-webkit-text-stroke:0.3px #1c1c1c;transform:scaleX(1.1088);">tinyflow-180nm</div>
<div class="t" style="left:272.27px;top:1382.00px;font-size:25px;color:#1c1c1c;font-weight:700;transform:scaleX(1.0294);">G</div>
<div class="t" style="left:1319.80px;top:1382.00px;font-size:25px;color:#1c1c1c;font-weight:700;transform:scaleX(1.0751);">xy</div>
<div class="t" style="left:1495.30px;top:1382.00px;font-size:25px;color:#1c1c1c;-webkit-text-stroke:0.3px #1c1c1c;transform:scaleX(1.0704);">3.656</div>
<div class="t" style="left:1705.69px;top:1382.00px;font-size:25px;color:#1c1c1c;-webkit-text-stroke:0.3px #1c1c1c;transform:scaleX(1.1095);">2.107</div>
<div style="left:402px;top:139px;width:1052px;height:1177px;background:#efefef;border:2px solid #666;border-radius:9px 9px 4px 4px;box-sizing:border-box;box-shadow:0 14px 26px -4px rgba(0,0,0,0.30)"></div>
<div style="left:404px;top:141px;width:1048px;height:55px;background:#d3d3d3;border-radius:7px 7px 0 0"></div>
<div style="left:404px;top:196px;width:1048px;height:1118px;box-shadow:inset 4px 0 0 #e9e9e9, inset -8px -8px 0 #e8e8e8"></div>
<svg style="position:absolute;left:413.7px;top:148.8px" width="40" height="40" viewBox="0 0 40 40"><defs><radialGradient id="kgd1" cx="0.6" cy="0.42" r="0.62"><stop offset="0" stop-color="#fdf8c8"/><stop offset="0.3" stop-color="#efdf7c"/><stop offset="0.65" stop-color="#e2a854"/><stop offset="0.9" stop-color="#a8742c"/><stop offset="1" stop-color="#6e4a18"/></radialGradient></defs><circle cx="20" cy="20" r="19.5" fill="url(#kgd1)"/><path d="M1 9 L5.8 9 L5.8 18 L15 8.5 L20.5 8.5 L10.5 19 L21 30.5 L15 30.5 L5.8 21 L5.8 30.5 L1 30.5 Z" fill="#000"/></svg>
<div class="t" style="left:687.16px;top:158.00px;font-size:25px;color:#2c2c2c;font-weight:700;transform:scaleX(1.1397);">Netlist Database Browser</div>
<svg style="position:absolute;left:1270px;top:155px;" width="170" height="30" viewBox="0 0 170 30"><path d="M7 20 L15 11 L23 20" stroke="#2c2c2c" stroke-width="3.6" fill="none"/><rect x="52" y="19.5" width="19" height="4" fill="#2c2c2c"/><rect x="99.8" y="7.8" width="14.5" height="14.5" stroke="#2c2c2c" stroke-width="3.6" fill="none"/><path d="M145.5 7 L160.5 22 M160.5 7 L145.5 22" stroke="#2c2c2c" stroke-width="3.6"/></svg>
<div class="t" style="left:428.77px;top:226.00px;font-size:25px;color:#1c1c1c;-webkit-text-stroke:0.3px #1c1c1c;transform:scaleX(1.1154);">Netlist</div>
<div style="left:624.5px;top:215.5px;width:619px;height:45px;background:linear-gradient(#fdfdfd,#f0f0f0);border:2px solid #bcbcbc;border-radius:6px;box-sizing:border-box"></div>
<svg style="position:absolute;left:1212.5px;top:233.0px;" width="18" height="10" viewBox="0 0 18 10"><path d="M1 1 L17 1 L9 9 Z" fill="#555"/></svg>
<div class="t" style="left:634.43px;top:226.00px;font-size:25px;color:#1c1c1c;-webkit-text-stroke:0.3px #1c1c1c;transform:scaleX(0.9363);">LVS</div>
<div class="t" style="left:460.10px;top:285.00px;font-size:25px;color:#1c1c1c;-webkit-text-stroke:0.3px #1c1c1c;transform:scaleX(1.0997);">... on layout</div>
<div style="left:624.5px;top:274px;width:619px;height:44.5px;background:linear-gradient(#fdfdfd,#f0f0f0);border:2px solid #bcbcbc;border-radius:6px;box-sizing:border-box"></div>
<svg style="position:absolute;left:1212.5px;top:291.25px;" width="18" height="10" viewBox="0 0 18 10"><path d="M1 1 L17 1 L9 9 Z" fill="#555"/></svg>
<div class="t" style="left:635.22px;top:285.00px;font-size:25px;color:#1c1c1c;-webkit-text-stroke:0.3px #1c1c1c;transform:scaleX(1.0810);">inv.gds</div>
<div style="left:1308.5px;top:215.3px;width:117.0px;height:43.5px;background:linear-gradient(#fdfdfd,#eeeeee);border:2px solid #bdbdbd;border-radius:6px;box-sizing:border-box"></div>
<div class="t" style="left:1323.70px;top:226.00px;font-size:25px;color:#1c1c1c;-webkit-text-stroke:0.3px #1c1c1c;transform:scaleX(1.0480);">File ...</div>
<svg style="position:absolute;left:1410px;top:245px;" width="13" height="8" viewBox="0 0 13 8"><path d="M0.5 0.5 L12.5 0.5 L6.5 7.5 Z" fill="#555"/></svg>
<div style="left:429.5px;top:351px;width:997px;height:1.5px;background:#a8a8a8"></div>
<div style="left:429.5px;top:352.5px;width:997px;height:1px;background:#fafafa"></div>
<svg style="position:absolute;left:440px;top:376px;" width="28" height="31" viewBox="0 0 28 31"><path d="M2 15.5 L14 2 L14 9 L26 9 L26 22 L14 22 L14 29 Z" fill="url(#bfg)" stroke="#8c8c8c" stroke-width="2" stroke-linejoin="round"/></svg>
<svg style="position:absolute;left:492px;top:376px;" width="28" height="31" viewBox="0 0 28 31"><path d="M26 15.5 L14 2 L14 9 L2 9 L2 22 L14 22 L14 29 Z" fill="url(#bfg)" stroke="#8c8c8c" stroke-width="2" stroke-linejoin="round"/></svg>
<svg style="position:absolute;left:545px;top:379px;" width="26" height="26" viewBox="0 0 26 26"><circle cx="13" cy="13" r="12.5" fill="#cfcfcf"/><circle cx="13" cy="13" r="11" fill="#d4d4d4"/><rect x="11" y="10" width="4.2" height="10" fill="#f4f4f4"/><circle cx="13" cy="6.5" r="2.2" fill="#f4f4f4"/></svg>
<svg style="position:absolute;left:598px;top:378px;" width="28" height="28" viewBox="0 0 28 28"><defs><linearGradient id="plg" x1="0" y1="0" x2="1" y2="1"><stop offset="0" stop-color="#8af070"/><stop offset="1" stop-color="#2a9a1a"/></linearGradient></defs><path d="M3 2 L25 14 L3 26 Z" fill="url(#plg)" stroke="#111" stroke-width="2" stroke-linejoin="round"/></svg>
<div style="left:861.5px;top:370px;width:500px;height:45.5px;background:#fff;border:2px solid #b8b8b8;border-radius:6px;box-sizing:border-box"></div>
<svg style="position:absolute;left:872px;top:378px;" width="28" height="28" viewBox="0 0 28 28"><path d="M14 1.5 L17 5 L21.5 3.5 L22 8 L26.5 9.5 L24.5 14 L26.5 18.5 L22 20 L21.5 24.5 L17 23 L14 26.5 L11 23 L6.5 24.5 L6 20 L1.5 18.5 L3.5 14 L1.5 9.5 L6 8 L6.5 3.5 L11 5 Z" fill="#777"/><circle cx="14" cy="14" r="4" fill="#fff"/></svg>
<div class="t" style="left:903.11px;top:381.00px;font-size:25px;color:#8a8a8a;-webkit-text-stroke:0.3px #8a8a8a;transform:scaleX(1.0943);">Find text ...</div>
<svg style="position:absolute;left:1324px;top:378px;" width="29" height="29" viewBox="0 0 29 29"><circle cx="14.5" cy="14" r="13.8" fill="#8c8c8c"/><path d="M9 8.5 L20 19.5 M20 8.5 L9 19.5" stroke="#f2f2f2" stroke-width="4.2"/></svg>
<svg style="position:absolute;left:1373px;top:376px;" width="34" height="32" viewBox="0 0 34 32"><defs><radialGradient id="mg" cx="0.35" cy="0.35" r="0.7"><stop offset="0" stop-color="#fff"/><stop offset="1" stop-color="#8a8a8a"/></radialGradient></defs><path d="M18 18 L30 29" stroke="#555" stroke-width="5.5" stroke-linecap="round"/><circle cx="12" cy="12" r="10" fill="url(#mg)" stroke="#666" stroke-width="2.2"/></svg>
<div style="left:431px;top:475.5px;width:995px;height:725px;background:#fbfbfb;border:2px solid #b4b4b4;border-top-color:#a8a8a8;box-sizing:border-box"></div>
<div style="left:431px;top:431px;width:126px;height:45px;background:linear-gradient(#ececec,#e2e2e2);border:2px solid #b4b4b4;border-bottom:none;border-radius:6px 6px 0 0;box-sizing:border-box"></div>
<div style="left:556px;top:431px;width:176px;height:45px;background:linear-gradient(#ececec,#e2e2e2);border:2px solid #b4b4b4;border-bottom:none;border-radius:6px 6px 0 0;box-sizing:border-box"></div>
<div style="left:976px;top:430.5px;width:91px;height:45.5px;background:linear-gradient(#ececec,#e2e2e2);border:2px solid #b4b4b4;border-bottom:none;border-radius:6px 6px 0 0;box-sizing:border-box"></div>
<div style="left:731px;top:426.5px;width:246px;height:51.5px;background:linear-gradient(#fdfdfd,#fbfbfb);border:2px solid #b4b4b4;border-bottom:none;border-radius:6px 6px 0 0;box-sizing:border-box"></div>
<div class="t" style="left:452.53px;top:443.00px;font-size:25px;color:#1c1c1c;-webkit-text-stroke:0.3px #1c1c1c;transform:scaleX(1.1331);">Netlist</div>
<div class="t" style="left:580.73px;top:443.00px;font-size:25px;color:#1c1c1c;-webkit-text-stroke:0.3px #1c1c1c;transform:scaleX(1.0719);">Schematic</div>
<div class="t" style="left:755.76px;top:441.00px;font-size:25px;color:#1c1c1c;-webkit-text-stroke:0.3px #1c1c1c;transform:scaleX(1.0368);">Cross Reference</div>
<div class="t" style="left:999.71px;top:443.00px;font-size:25px;color:#1c1c1c;-webkit-text-stroke:0.3px #1c1c1c;transform:scaleX(1.0436);">Log</div>
<div style="left:442px;top:488.5px;width:146px;height:702px;background:#fff;border:2px solid #b4b4b4;box-sizing:border-box"></div>
<div style="left:443.8px;top:490px;width:142.5px;height:39.5px;background:linear-gradient(#fcfcfc,#ececec);border-bottom:1.5px solid #b8b8b8;box-sizing:border-box"></div>
<div class="t" style="left:448.34px;top:499.00px;font-size:25px;color:#1c1c1c;-webkit-text-stroke:0.3px #1c1c1c;transform:scaleX(1.0619);">Circuits</div>
<div style="left:443.8px;top:530px;width:142.5px;height:38.5px;background:#4a87c3"></div>
<svg style="position:absolute;left:491px;top:533px" width="30" height="30" viewBox="0 0 30 30"><rect x="2" y="6" width="26" height="18" fill="#c6dcf0" stroke="#4a4a4a" stroke-width="2.4"/><rect x="5.0" y="1" width="2" height="5" fill="#4a4a4a"/><rect x="5.0" y="24" width="2" height="5" fill="#4a4a4a"/><rect x="11.2" y="1" width="2" height="5" fill="#4a4a4a"/><rect x="11.2" y="24" width="2" height="5" fill="#4a4a4a"/><rect x="17.4" y="1" width="2" height="5" fill="#4a4a4a"/><rect x="17.4" y="24" width="2" height="5" fill="#4a4a4a"/><rect x="23.6" y="1" width="2" height="5" fill="#4a4a4a"/><rect x="23.6" y="24" width="2" height="5" fill="#4a4a4a"/></svg>
<div class="t" style="left:532.35px;top:537.00px;font-size:25px;color:#ffffff;-webkit-text-stroke:0.3px #ffffff;transform:scaleX(0.9750);">INV</div>
<div style="left:443.8px;top:1159.5px;width:142.49999999999994px;height:29.5px;background:linear-gradient(#f0f0f0,#fafafa);border-top:1.5px solid #c4c4c4;box-sizing:border-box"></div>
<div style="left:443.8px;top:1159.5px;width:28px;height:29.5px;border-right:1.5px solid #cfcfcf;box-sizing:border-box"></div>
<div style="left:557.3px;top:1159.5px;width:29px;height:29.5px;border-left:1.5px solid #cfcfcf;box-sizing:border-box"></div>
<div style="left:525px;top:1161.0px;width:34px;height:28.0px;background:#e2e2e2;border-left:1.5px solid #d0d0d0;border-right:1.5px solid #d0d0d0;box-sizing:border-box"></div>
<svg style="position:absolute;left:453.8px;top:1167.25px;" width="10" height="15" viewBox="0 0 10 15"><path d="M9.5 0.5 L0.5 7.5 L9.5 14.5 Z" fill="#505050"/></svg>
<svg style="position:absolute;left:568.3px;top:1167.25px;" width="10" height="15" viewBox="0 0 10 15"><path d="M0.5 0.5 L9.5 7.5 L0.5 14.5 Z" fill="#505050"/></svg>
<div style="left:596.5px;top:488.5px;width:818.5px;height:702px;background:#fff;border:2px solid #b4b4b4;box-sizing:border-box"></div>
<div style="left:598px;top:490px;width:815px;height:39.5px;background:linear-gradient(#fcfcfc,#ececec);border-bottom:1.5px solid #b8b8b8;box-sizing:border-box"></div>
<div style="left:857px;top:491px;width:1.5px;height:37px;background:#cfcfcf"></div>
<div style="left:907.3px;top:491px;width:1.5px;height:37px;background:#cfcfcf"></div>
<div style="left:1125.6px;top:491px;width:1.5px;height:37px;background:#cfcfcf"></div>
<div class="t" style="left:603.04px;top:499.00px;font-size:25px;color:#1c1c1c;-webkit-text-stroke:0.3px #1c1c1c;transform:scaleX(1.0594);">Objects</div>
<svg style="position:absolute;left:866px;top:497.5px;" width="26" height="26" viewBox="0 0 26 26"><circle cx="13" cy="13" r="12.5" fill="#cfcfcf"/><circle cx="13" cy="13" r="11" fill="#d6d6d6"/><rect x="11" y="10" width="4.2" height="10" fill="#f4f4f4"/><circle cx="13" cy="6.5" r="2.2" fill="#f4f4f4"/></svg>
<div class="t" style="left:912.93px;top:500.00px;font-size:25px;color:#1c1c1c;-webkit-text-stroke:0.3px #1c1c1c;transform:scaleX(1.0832);">Layout</div>
<div class="t" style="left:1130.71px;top:500.00px;font-size:25px;color:#1c1c1c;-webkit-text-stroke:0.3px #1c1c1c;transform:scaleX(1.0450);">Reference</div>
<div style="left:598px;top:530px;width:815px;height:38px;background:linear-gradient(#f0f7fd,#e6eef7);border-top:2px solid #b0bfcc;border-bottom:2px solid #bccbd9;box-sizing:border-box"></div>
<svg style="position:absolute;left:611px;top:542.1px;" width="16" height="12" viewBox="0 0 16 12"><path d="M0.5 0.5 L15.5 0.5 L8 11.5 Z" fill="#4a4a4a"/></svg>
<svg style="position:absolute;left:645.5px;top:534.0px" width="30" height="30" viewBox="0 0 30 30"><rect x="2" y="6" width="26" height="18" fill="none" stroke="#4a4a4a" stroke-width="2.4"/><rect x="5.0" y="1" width="2" height="5" fill="#4a4a4a"/><rect x="5.0" y="24" width="2" height="5" fill="#4a4a4a"/><rect x="11.2" y="1" width="2" height="5" fill="#4a4a4a"/><rect x="11.2" y="24" width="2" height="5" fill="#4a4a4a"/><rect x="17.4" y="1" width="2" height="5" fill="#4a4a4a"/><rect x="17.4" y="24" width="2" height="5" fill="#4a4a4a"/><rect x="23.6" y="1" width="2" height="5" fill="#4a4a4a"/><rect x="23.6" y="24" width="2" height="5" fill="#4a4a4a"/></svg>
<div class="t" style="left:685.79px;top:537.00px;font-size:25px;color:#5bbf40;-webkit-text-stroke:0.3px #5bbf40;transform:scaleX(1.0050);">INV</div>
<div class="t" style="left:912.77px;top:537.00px;font-size:25px;color:#5bbf40;-webkit-text-stroke:0.3px #5bbf40;transform:scaleX(1.0125);">INV</div>
<div class="t" style="left:1130.77px;top:537.00px;font-size:25px;color:#5bbf40;-webkit-text-stroke:0.3px #5bbf40;transform:scaleX(1.0125);">INV</div>
<svg style="position:absolute;left:651px;top:580.1700000000001px;" width="16" height="12" viewBox="0 0 16 12"><path d="M0.5 0.5 L15.5 0.5 L8 11.5 Z" fill="#4a4a4a"/></svg>
<svg style="position:absolute;left:686px;top:580.07px;" width="30" height="16" viewBox="0 0 30 16"><path d="M1 8 L11 8 M11 2 L20 2 L27 8 L20 14 L11 14 Z" stroke="#4a4a4a" stroke-width="2.2" fill="none" stroke-linejoin="round"/></svg>
<div class="t" style="left:725.58px;top:575.00px;font-size:25px;color:#1c1c1c;-webkit-text-stroke:0.3px #1c1c1c;transform:scaleX(1.0123);">Pins</div>
<svg style="position:absolute;left:692px;top:616.4399999999999px;" width="13" height="16" viewBox="0 0 13 16"><path d="M0.5 0.5 L12.5 8 L0.5 15.5 Z" fill="#4a4a4a"/></svg>
<svg style="position:absolute;left:725.5px;top:618.14px;" width="30" height="16" viewBox="0 0 30 16"><path d="M1 8 L11 8 M11 2 L20 2 L27 8 L20 14 L11 14 Z" stroke="#4a4a4a" stroke-width="2.2" fill="none" stroke-linejoin="round"/></svg>
<div class="t" style="left:767.80px;top:613.00px;font-size:25px;color:#5bbf40;-webkit-text-stroke:0.3px #5bbf40;transform:scaleX(0.9118);">A</div>
<div class="t" style="left:914.10px;top:613.00px;font-size:25px;color:#5bbf40;-webkit-text-stroke:0.3px #5bbf40;transform:scaleX(1.0634);">A (3)</div>
<div class="t" style="left:1132.30px;top:613.00px;font-size:25px;color:#5bbf40;-webkit-text-stroke:0.3px #5bbf40;transform:scaleX(1.0785);">A (3)</div>
<svg style="position:absolute;left:692px;top:654.51px;" width="13" height="16" viewBox="0 0 13 16"><path d="M0.5 0.5 L12.5 8 L0.5 15.5 Z" fill="#4a4a4a"/></svg>
<svg style="position:absolute;left:725.5px;top:656.21px;" width="30" height="16" viewBox="0 0 30 16"><path d="M1 8 L11 8 M11 2 L20 2 L27 8 L20 14 L11 14 Z" stroke="#4a4a4a" stroke-width="2.2" fill="none" stroke-linejoin="round"/></svg>
<div class="t" style="left:767.80px;top:651.00px;font-size:25px;color:#5bbf40;-webkit-text-stroke:0.3px #5bbf40;transform:scaleX(0.9878);">VDD</div>
<div class="t" style="left:914.10px;top:651.00px;font-size:25px;color:#5bbf40;-webkit-text-stroke:0.3px #5bbf40;transform:scaleX(1.0477);">VDD (3)</div>
<div class="t" style="left:1132.30px;top:651.00px;font-size:25px;color:#5bbf40;-webkit-text-stroke:0.3px #5bbf40;transform:scaleX(1.0567);">VDD (3)</div>
<svg style="position:absolute;left:692px;top:692.5799999999999px;" width="13" height="16" viewBox="0 0 13 16"><path d="M0.5 0.5 L12.5 8 L0.5 15.5 Z" fill="#4a4a4a"/></svg>
<svg style="position:absolute;left:725.5px;top:694.28px;" width="30" height="16" viewBox="0 0 30 16"><path d="M1 8 L11 8 M11 2 L20 2 L27 8 L20 14 L11 14 Z" stroke="#4a4a4a" stroke-width="2.2" fill="none" stroke-linejoin="round"/></svg>
<div class="t" style="left:767.80px;top:689.00px;font-size:25px;color:#5bbf40;-webkit-text-stroke:0.3px #5bbf40;transform:scaleX(0.9220);">VSS</div>
<div class="t" style="left:914.10px;top:689.00px;font-size:25px;color:#5bbf40;-webkit-text-stroke:0.3px #5bbf40;transform:scaleX(1.0116);">VSS (3)</div>
<div class="t" style="left:1132.30px;top:689.00px;font-size:25px;color:#5bbf40;-webkit-text-stroke:0.3px #5bbf40;transform:scaleX(1.0209);">VSS (3)</div>
<svg style="position:absolute;left:692px;top:730.65px;" width="13" height="16" viewBox="0 0 13 16"><path d="M0.5 0.5 L12.5 8 L0.5 15.5 Z" fill="#4a4a4a"/></svg>
<svg style="position:absolute;left:725.5px;top:732.35px;" width="30" height="16" viewBox="0 0 30 16"><path d="M1 8 L11 8 M11 2 L20 2 L27 8 L20 14 L11 14 Z" stroke="#4a4a4a" stroke-width="2.2" fill="none" stroke-linejoin="round"/></svg>
<div class="t" style="left:767.80px;top:728.00px;font-size:25px;color:#5bbf40;-webkit-text-stroke:0.3px #5bbf40;transform:scaleX(0.7941);">Y</div>
<div class="t" style="left:914.10px;top:728.00px;font-size:25px;color:#5bbf40;-webkit-text-stroke:0.3px #5bbf40;transform:scaleX(1.0066);">Y (3)</div>
<div class="t" style="left:1132.30px;top:728.00px;font-size:25px;color:#5bbf40;-webkit-text-stroke:0.3px #5bbf40;transform:scaleX(1.0218);">Y (3)</div>
<svg style="position:absolute;left:651px;top:770.5200000000001px;" width="16" height="12" viewBox="0 0 16 12"><path d="M0.5 0.5 L15.5 0.5 L8 11.5 Z" fill="#4a4a4a"/></svg>
<svg style="position:absolute;left:686px;top:766.72px;" width="28" height="24" viewBox="0 0 28 24"><path d="M2 5 L26 5 M11 5 L11 21.5" stroke="#505050" stroke-width="2.2"/><circle cx="11" cy="5" r="4.6" fill="#505050"/></svg>
<div class="t" style="left:725.42px;top:766.00px;font-size:25px;color:#1c1c1c;-webkit-text-stroke:0.3px #1c1c1c;transform:scaleX(1.0878);">Nets</div>
<svg style="position:absolute;left:692px;top:806.79px;" width="13" height="16" viewBox="0 0 13 16"><path d="M0.5 0.5 L12.5 8 L0.5 15.5 Z" fill="#4a4a4a"/></svg>
<svg style="position:absolute;left:726px;top:804.79px;" width="28" height="24" viewBox="0 0 28 24"><path d="M2 5 L26 5 M11 5 L11 21.5" stroke="#505050" stroke-width="2.2"/><circle cx="11" cy="5" r="4.6" fill="#505050"/></svg>
<div class="t" style="left:767.80px;top:804.00px;font-size:25px;color:#5bbf40;-webkit-text-stroke:0.3px #5bbf40;transform:scaleX(0.9118);">A</div>
<div class="t" style="left:914.10px;top:804.00px;font-size:25px;color:#5bbf40;-webkit-text-stroke:0.3px #5bbf40;transform:scaleX(1.0634);">A (3)</div>
<div class="t" style="left:1132.30px;top:804.00px;font-size:25px;color:#5bbf40;-webkit-text-stroke:0.3px #5bbf40;transform:scaleX(1.0785);">A (3)</div>
<svg style="position:absolute;left:692px;top:844.8599999999999px;" width="13" height="16" viewBox="0 0 13 16"><path d="M0.5 0.5 L12.5 8 L0.5 15.5 Z" fill="#4a4a4a"/></svg>
<svg style="position:absolute;left:726px;top:842.8599999999999px;" width="28" height="24" viewBox="0 0 28 24"><path d="M2 5 L26 5 M11 5 L11 21.5" stroke="#505050" stroke-width="2.2"/><circle cx="11" cy="5" r="4.6" fill="#505050"/></svg>
<div class="t" style="left:767.80px;top:842.00px;font-size:25px;color:#5bbf40;-webkit-text-stroke:0.3px #5bbf40;transform:scaleX(0.9878);">VDD</div>
<div class="t" style="left:914.10px;top:842.00px;font-size:25px;color:#5bbf40;-webkit-text-stroke:0.3px #5bbf40;transform:scaleX(1.0477);">VDD (3)</div>
<div class="t" style="left:1132.30px;top:842.00px;font-size:25px;color:#5bbf40;-webkit-text-stroke:0.3px #5bbf40;transform:scaleX(1.0567);">VDD (3)</div>
<svg style="position:absolute;left:692px;top:882.93px;" width="13" height="16" viewBox="0 0 13 16"><path d="M0.5 0.5 L12.5 8 L0.5 15.5 Z" fill="#4a4a4a"/></svg>
<svg style="position:absolute;left:726px;top:880.93px;" width="28" height="24" viewBox="0 0 28 24"><path d="M2 5 L26 5 M11 5 L11 21.5" stroke="#505050" stroke-width="2.2"/><circle cx="11" cy="5" r="4.6" fill="#505050"/></svg>
<div class="t" style="left:767.80px;top:880.00px;font-size:25px;color:#5bbf40;-webkit-text-stroke:0.3px #5bbf40;transform:scaleX(0.9220);">VSS</div>
<div class="t" style="left:914.10px;top:880.00px;font-size:25px;color:#5bbf40;-webkit-text-stroke:0.3px #5bbf40;transform:scaleX(1.0116);">VSS (3)</div>
<div class="t" style="left:1132.30px;top:880.00px;font-size:25px;color:#5bbf40;-webkit-text-stroke:0.3px #5bbf40;transform:scaleX(1.0209);">VSS (3)</div>
<svg style="position:absolute;left:692px;top:921.0px;" width="13" height="16" viewBox="0 0 13 16"><path d="M0.5 0.5 L12.5 8 L0.5 15.5 Z" fill="#4a4a4a"/></svg>
<svg style="position:absolute;left:726px;top:919.0px;" width="28" height="24" viewBox="0 0 28 24"><path d="M2 5 L26 5 M11 5 L11 21.5" stroke="#505050" stroke-width="2.2"/><circle cx="11" cy="5" r="4.6" fill="#505050"/></svg>
<div class="t" style="left:767.80px;top:918.00px;font-size:25px;color:#5bbf40;-webkit-text-stroke:0.3px #5bbf40;transform:scaleX(0.7941);">Y</div>
<div class="t" style="left:914.10px;top:918.00px;font-size:25px;color:#5bbf40;-webkit-text-stroke:0.3px #5bbf40;transform:scaleX(1.0066);">Y (3)</div>
<div class="t" style="left:1132.30px;top:918.00px;font-size:25px;color:#5bbf40;-webkit-text-stroke:0.3px #5bbf40;transform:scaleX(1.0218);">Y (3)</div>
<svg style="position:absolute;left:651px;top:960.87px;" width="16" height="12" viewBox="0 0 16 12"><path d="M0.5 0.5 L15.5 0.5 L8 11.5 Z" fill="#4a4a4a"/></svg>
<svg style="position:absolute;left:686px;top:957.97px;" width="28" height="26" viewBox="0 0 28 26"><path d="M0.4 2.6 L4.8 2.6 L4.8 15 M21.4 15 L21.4 2.6 L26.2 2.6 M13.3 16 L13.3 23.4" stroke="#505050" stroke-width="2.2" fill="none"/><rect x="2.6" y="13.4" width="21.4" height="3.8" rx="1" fill="#505050"/></svg>
<div class="t" style="left:726.05px;top:956.00px;font-size:25px;color:#1c1c1c;-webkit-text-stroke:0.3px #1c1c1c;transform:scaleX(1.0773);">Devices</div>
<svg style="position:absolute;left:692px;top:997.14px;" width="13" height="16" viewBox="0 0 13 16"><path d="M0.5 0.5 L12.5 8 L0.5 15.5 Z" fill="#4a4a4a"/></svg>
<svg style="position:absolute;left:726px;top:996.0400000000001px;" width="28" height="26" viewBox="0 0 28 26"><path d="M0.4 2.6 L4.8 2.6 L4.8 15 M21.4 15 L21.4 2.6 L26.2 2.6 M13.3 16 L13.3 23.4" stroke="#505050" stroke-width="2.2" fill="none"/><rect x="2.6" y="13.4" width="21.4" height="3.8" rx="1" fill="#505050"/></svg>
<div class="t" style="left:766.45px;top:994.00px;font-size:25px;color:#5bbf40;-webkit-text-stroke:0.3px #5bbf40;transform:scaleX(0.9761);">NMOS</div>
<div class="t" style="left:914.30px;top:994.00px;font-size:25px;color:#5bbf40;-webkit-text-stroke:0.3px #5bbf40;transform:scaleX(1.0606);">$2 / NMOS [L=0.1</div>
<div style="left:1126px;top:986.84px;width:5px;height:38px;background:#fff"></div>
<div class="t" style="left:1133.35px;top:994.00px;font-size:25px;color:#5bbf40;-webkit-text-stroke:0.3px #5bbf40;transform:scaleX(1.0540);">_N / NMOS [L=0.18, W=</div>
<svg style="position:absolute;left:692px;top:1035.21px;" width="13" height="16" viewBox="0 0 13 16"><path d="M0.5 0.5 L12.5 8 L0.5 15.5 Z" fill="#4a4a4a"/></svg>
<svg style="position:absolute;left:726px;top:1034.1100000000001px;" width="28" height="26" viewBox="0 0 28 26"><path d="M0.4 2.6 L4.8 2.6 L4.8 15 M21.4 15 L21.4 2.6 L26.2 2.6 M13.3 16 L13.3 23.4" stroke="#505050" stroke-width="2.2" fill="none"/><rect x="2.6" y="13.4" width="21.4" height="3.8" rx="1" fill="#505050"/></svg>
<div class="t" style="left:766.51px;top:1032.00px;font-size:25px;color:#5bbf40;-webkit-text-stroke:0.3px #5bbf40;transform:scaleX(0.9430);">PMOS</div>
<div class="t" style="left:914.30px;top:1032.00px;font-size:25px;color:#5bbf40;-webkit-text-stroke:0.3px #5bbf40;transform:scaleX(1.0579);">$1 / PMOS [L=0.1</div>
<div style="left:1126px;top:1024.91px;width:5px;height:38px;background:#fff"></div>
<div class="t" style="left:1133.36px;top:1032.00px;font-size:25px;color:#5bbf40;-webkit-text-stroke:0.3px #5bbf40;transform:scaleX(1.0649);">_P / PMOS [L=0.18, W=</div>
<div style="left:1414.5px;top:530px;width:10px;height:629px;background:#fbfbfb"></div>
<div style="left:1413px;top:530px;width:1.5px;height:660px;background:#b4b4b4"></div>
<div style="left:598px;top:1159.5px;width:815px;height:29.5px;background:linear-gradient(#f0f0f0,#fafafa);border-top:1.5px solid #c4c4c4;box-sizing:border-box"></div>
<div style="left:598px;top:1159.5px;width:28px;height:29.5px;border-right:1.5px solid #cfcfcf;box-sizing:border-box"></div>
<div style="left:1384px;top:1159.5px;width:29px;height:29.5px;border-left:1.5px solid #cfcfcf;box-sizing:border-box"></div>
<div style="left:1369px;top:1161.0px;width:16.5px;height:28.0px;background:#e2e2e2;border-left:1.5px solid #d0d0d0;border-right:1.5px solid #d0d0d0;box-sizing:border-box"></div>
<svg style="position:absolute;left:608px;top:1167.25px;" width="10" height="15" viewBox="0 0 10 15"><path d="M9.5 0.5 L0.5 7.5 L9.5 14.5 Z" fill="#505050"/></svg>
<svg style="position:absolute;left:1395px;top:1167.25px;" width="10" height="15" viewBox="0 0 10 15"><path d="M0.5 0.5 L9.5 7.5 L0.5 14.5 Z" fill="#505050"/></svg>
<div style="left:429.5px;top:1224.5px;width:997px;height:1.5px;background:#a8a8a8"></div>
<div style="left:429.5px;top:1226px;width:997px;height:1px;background:#fafafa"></div>
<div style="left:430px;top:1243.4px;width:160px;height:44.59999999999991px;background:linear-gradient(#f6f8fa,#dde4ec);border:1.8px solid #4c88c0;border-radius:6px;box-sizing:border-box"></div>
<div class="t" style="left:451.72px;top:1253.00px;font-size:25px;color:#1c1c1c;-webkit-text-stroke:0.3px #1c1c1c;transform:scaleX(1.0752);">Configure</div>
<div style="left:603.3px;top:1243.4px;width:159.0px;height:44.59999999999991px;background:linear-gradient(#fdfdfd,#eeeeee);border:2px solid #bdbdbd;border-radius:6px;box-sizing:border-box"></div>
<div class="t" style="left:623.73px;top:1253.00px;font-size:25px;color:#1c1c1c;-webkit-text-stroke:0.3px #1c1c1c;transform:scaleX(1.0369);">Probe Net</div>
<div style="left:775px;top:1251px;width:27.5px;height:27.5px;background:#fff;border:1.5px solid #b8b8b8;border-radius:3px;box-sizing:border-box"></div>
<div class="t" style="left:812.77px;top:1253.00px;font-size:25px;color:#1c1c1c;-webkit-text-stroke:0.3px #1c1c1c;transform:scaleX(1.0135);">Lock</div>
<div style="left:1266.5px;top:1243.8px;width:159.20000000000005px;height:44.5px;background:linear-gradient(#fdfdfd,#eeeeee);border:2px solid #bdbdbd;border-radius:6px;box-sizing:border-box"></div>
<div class="t" style="left:1313.78px;top:1254.00px;font-size:25px;color:#1c1c1c;-webkit-text-stroke:0.3px #1c1c1c;transform:scaleX(1.0240);">Close</div>
</div></body></html>
